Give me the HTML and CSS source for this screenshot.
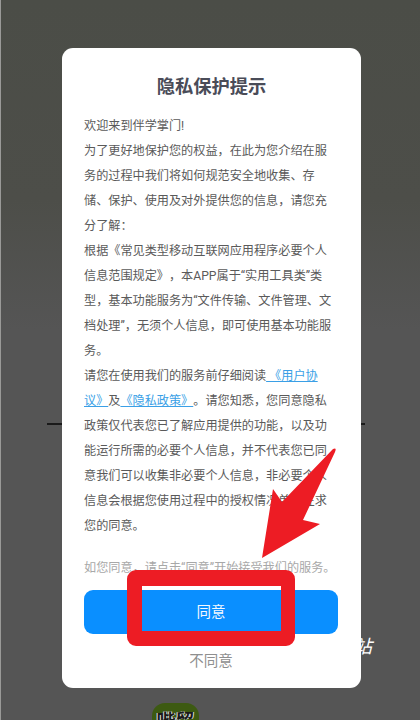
FILE: index.html
```html
<!DOCTYPE html>
<html lang="zh-CN">
<head>
<meta charset="utf-8">
<title>隐私保护提示</title>
<link rel="stylesheet" href="styles.css">
</head>
<body>
<div class="page">
  <div class="rule"></div>
  <div class="behind-char">站</div>
  <div class="logo"><span class="logo-text">哔贸</span></div>
  <section class="card">
    <h1 class="title">隐私保护提示</h1>
    <p class="body">欢迎来到伴学掌门!<br>
为了更好地保护您的权益，在此为您介绍在服<br>
务的过程中我们将如何规范安全地收集、存<br>
储、保护、使用及对外提供您的信息，请您充<br>
分了解：<br>
根据《常见类型移动互联网应用程序必要个人<br>
信息范围规定》，本APP属于“实用工具类”类<br>
型，基本功能服务为“文件传输、文件管理、文<br>
档处理”，无须个人信息，即可使用基本功能服<br>
务。<br>
请您在使用我们的服务前仔细阅读<a class="link" href="#"> 《用户协<br>议》</a>及<a class="link" href="#">《隐私政策》</a>。请您知悉，您同意隐私<br>
政策仅代表您已了解应用提供的功能，以及功<br>
能运行所需的必要个人信息，并不代表您已同<br>
意我们可以收集非必要个人信息，非必要个人<br>
信息会根据您使用过程中的授权情况单独征求<br>
您的同意。</p>
    <p class="note">如您同意，请点击“同意”开始接受我们的服务。</p>
    <button class="agree" type="button">同意</button>
    <div class="decline">不同意</div>
  </section>
  <div class="highlight"></div>
  <svg class="arrow" viewBox="0 0 420 720" aria-hidden="true">
    <path d="M262 558 L273 489 L282 502 L333 449 Q337 447 335 452 L303 520 L320 524 Z" fill="#ed1c24"/>
  </svg>
</div>
</body>
</html>
```
FILE: styles.css
```css
* { box-sizing: border-box; }
html, body { margin: 0; padding: 0; }
body {
  font-family: Roboto, "Noto Sans CJK SC", sans-serif;
  text-spacing-trim: space-all;
  font-feature-settings: normal;
}
.page {
  position: relative;
  width: 420px;
  height: 720px;
  overflow: hidden;
  padding: 48px 0 0 62px;
  background: linear-gradient(#4b4d47 0, #4d4e49 200px, #555555 330px, #555555 100%);
  border-left: 1px solid #9a9a98;
  background-origin: border-box;
}
.card {
  position: relative;
  width: 299px;
  height: 640px;
  margin-left: -1px;
  padding: 26px 22px 0;
  background: #ffffff;
  border-radius: 11px;
}
.title {
  margin: 0 0 14px;
  font-size: 18.3px;
  line-height: 26px;
  font-weight: 700;
  text-align: center;
  color: #4a4c58;
}
.body {
  margin: 0;
  font-size: 12.15px;
  line-height: 25px;
  color: #5a5a5a;
  white-space: nowrap;
}
.link { color: #3a9fe6; text-decoration: underline; }
.note {
  margin: 17px 0 0;
  font-size: 12.15px;
  line-height: 25px;
  color: #a8a8a8;
  white-space: nowrap;
}
.agree {
  display: block;
  width: 254px;
  height: 44px;
  margin-top: 9px;
  padding: 0 0 3px;
  border: 0;
  border-radius: 9px;
  background: #0a8fff;
  color: #f2f8ff;
  font: inherit;
  font-size: 14.5px;
}
.decline {
  margin-top: 16px;
  width: 254px;
  font-size: 14.5px;
  line-height: 24px;
  text-align: center;
  color: #8f8f8f;
}
.rule {
  position: absolute;
  left: 46px;
  top: 423px;
  width: 318px;
  height: 1.5px;
  background: #1a1a1a;
}
.behind-char {
  position: absolute;
  left: 353px;
  top: 636px;
  font-size: 18px;
  line-height: 22px;
  font-style: italic;
  color: #ffffff;
}
.logo {
  position: absolute;
  left: 151px;
  top: 703px;
  width: 47px;
  height: 47px;
  border-radius: 13px;
  background: #3d5a12;
  text-align: center;
}
.logo-text {
  display: block;
  margin-top: 8px;
  font-size: 19px;
  line-height: 22px;
  font-weight: 700;
  color: #1a1a1a;
  text-shadow: 1px 0 0 #ddd, -1px 0 0 #ddd;
}
.highlight {
  position: absolute;
  left: 126px;
  top: 570px;
  width: 168px;
  height: 76px;
  border-style: solid;
  border-color: #ed1c24;
  border-width: 16px 14px 15px 15px;
  border-radius: 9px;
}
.arrow {
  position: absolute;
  left: -1px;
  top: 0;
  width: 420px;
  height: 720px;
  pointer-events: none;
}
```
